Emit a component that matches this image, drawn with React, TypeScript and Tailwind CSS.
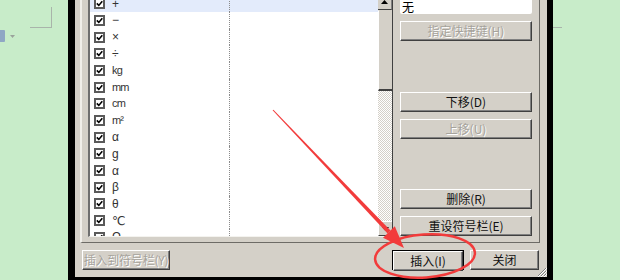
import React from "react";

const items = ["+", "−", "×", "÷", "kg", "mm", "cm", "m²", "α", "g", "α", "β", "θ", "℃", "Ω"];

const btnBase =
  "flex items-center justify-center h-[20px] whitespace-nowrap bg-[#d4d0c8] border border-t-white border-l-white border-b-[#404040] border-r-[#404040] shadow-[inset_-1px_-1px_0_#808080] text-[12px] leading-none";
const enabled = "text-[#111]";
const disabled = "text-[#a6a39c] [text-shadow:1px_1px_0_#ffffff]";

function Check() {
  return (
    <div className="w-[11px] h-[11px] border-2 border-[#5a5a5a] bg-white flex items-center justify-center shrink-0">
      <svg width="7" height="7" viewBox="0 0 7 7">
        <path d="M0.8 3.4 L2.8 5.4 L6.3 1.2" stroke="#000" strokeWidth="1.6" fill="none" />
      </svg>
    </div>
  );
}

function Row({ s, hl }: { s: string; hl: boolean }) {
  const narrow = s === "kg" || s === "mm" || s === "cm" || s === "m²";
  return (
    <div className={hl ? "flex h-[16.7px] shrink-0 bg-[#e3ebfb]" : "flex h-[16.7px] shrink-0"}>
      <div className="w-[139px] flex items-center pl-[4px] gap-[7px]">
        <Check />
        <span
          className={
            narrow
              ? "text-[11px] leading-none tracking-[-0.8px] text-[#333] font-['Liberation_Sans_Narrow','Liberation_Sans',sans-serif]"
              : "text-[12px] leading-none text-[#333] font-['Liberation_Sans','DejaVu_Sans','Noto_Sans_CJK_SC',sans-serif]"
          }
        >
          {s}
        </span>
      </div>
      <div className="flex-1 border-l border-dotted border-[#8a8a8a]" />
    </div>
  );
}

export default function App() {
  return (
    <div className="relative flex w-[620px] h-[280px] overflow-hidden bg-[#c8ecc9] font-['Liberation_Sans','Noto_Sans_CJK_SC',sans-serif]">
      {/* left green area */}
      <div className="w-[68px] shrink-0 flex flex-col">
        <div className="ml-[30px] mt-[7px] w-[22px] h-[21px] border-r border-b border-[#a9b4aa]" />
        <div className="flex items-center mt-[2px] gap-[5px]">
          <div className="w-[5px] h-[12px] bg-[#8fa7c4] rounded-r-[1px]" />
          <svg width="5" height="3" viewBox="0 0 5 3">
            <path d="M0 0 L5 0 L2.5 3 Z" fill="#9aa39b" />
          </svg>
        </div>
      </div>

      {/* dialog */}
      <div className="relative w-[485px] h-[280px] shrink-0 border-l-[7px] border-r-[6px] border-b-[3px] border-black bg-[#d4d0c8] flex flex-col">
        {/* top section */}
        <div className="h-[243px] shrink-0 pl-[5px] pr-[7px] flex">
          <div className="flex-1 flex border-l-2 border-l-[#f1efea] border-r border-r-[#6d6b66] border-b border-b-[#6d6b66] pl-[6px] pr-[7px] pb-[5px]">
            {/* list */}
            <div className="w-[305px] h-[237px] flex border-l-2 border-l-[#6f6f6f] border-b border-b-[#f4f3ef] bg-white overflow-hidden">
              <div className="flex-1 flex flex-col -mt-[4.7px] overflow-hidden">
                {items.map((s, i) => (
                  <Row key={i} s={s} hl={i === 0} />
                ))}
              </div>
              {/* scrollbar */}
              <div className="w-[15px] flex flex-col border-r border-r-[#404040] bg-[repeating-conic-gradient(#ffffff_0%_25%,#d4d0c8_0%_50%)] bg-[length:2px_2px]">
                <div className="h-[16px] -mt-[6px] shrink-0 bg-[#d4d0c8] border-b border-b-[#404040] border-r border-r-[#808080] flex items-center justify-center">
                  <svg width="7" height="4" viewBox="0 0 7 4">
                    <path d="M0 4 L3.5 0 L7 4 Z" fill="#000" />
                  </svg>
                </div>
                <div className="h-[81px] shrink-0 bg-[#d4d0c8] border-t border-t-[#d4d0c8] border-l border-l-white border-b-2 border-b-[#404040]" />
                <div className="flex-1" />
                <div className="h-[15px] shrink-0 bg-[#d4d0c8] border-t border-t-white border-l border-l-white border-b border-b-[#404040] flex items-center justify-center">
                  <svg width="7" height="4" viewBox="0 0 7 4">
                    <path d="M0 0 L3.5 4 L7 0 Z" fill="#000" />
                  </svg>
                </div>
              </div>
            </div>

            {/* right column */}
            <div className="ml-[7px] w-[132px] flex flex-col">
              <div className="h-[14px] -mb-[1px] shrink-0 bg-white rounded-b-[2px] flex items-center pl-[2px] text-[12px] leading-[12px] text-black font-['Noto_Sans_CJK_SC',sans-serif]">
                无
              </div>
              <div className={`${btnBase} ${disabled} mt-[8px] font-['Noto_Sans_CJK_SC',sans-serif]`}>指定快捷键(H)</div>
              <div className={`${btnBase} ${enabled} mt-[51px] font-['Noto_Sans_CJK_SC',sans-serif]`}>下移(D)</div>
              <div className={`${btnBase} ${disabled} mt-[7px] font-['Noto_Sans_CJK_SC',sans-serif]`}>上移(U)</div>
              <div className={`${btnBase} ${enabled} mt-[50px] font-['Noto_Sans_CJK_SC',sans-serif]`}>删除(R)</div>
              <div className={`${btnBase} ${enabled} mt-[7px] font-['Noto_Sans_CJK_SC',sans-serif]`}>重设符号栏(E)</div>
            </div>
          </div>
        </div>

        {/* bottom section */}
        <div className="flex-1 flex items-start pt-[7px] pl-[7px] pr-[8px] font-['Noto_Sans_CJK_SC',sans-serif]">
          <div className={`${btnBase} ${disabled} w-[88px] text-[11.5px] tracking-[-0.2px]`}>插入到符号栏(Y)</div>
          <div className="flex-1" />
          <div className="w-[72px] h-[20px] border border-black flex">
            <div className={`${btnBase} ${enabled} flex-1 h-[18px]`}>插入(I)</div>
          </div>
          <div className={`${btnBase} ${enabled} w-[69px] ml-[6px]`}>关闭</div>
        </div>

        {/* resize grip */}
        <svg className="absolute right-0 bottom-0" width="10" height="10" viewBox="0 0 10 10">
          <path d="M9 1 L1 9 M9 4 L4 9 M9 7 L7 9" stroke="#808080" strokeWidth="1" />
          <path d="M10 1 L1 10 M10 4 L4 10 M10 7 L7 10" stroke="#ffffff" strokeWidth="1" />
        </svg>
      </div>

      {/* right green area */}
      <div className="flex-1 flex flex-col">
        <div className="mt-[27px] w-[9px] h-px bg-[#a9b4aa]" />
      </div>

      {/* red annotations */}
      <svg className="absolute inset-0 pointer-events-none" width="620" height="280" viewBox="0 0 620 280">
        <polygon points="272.6,110.3 273.4,109.7 390.5,230.6 387.6,233.4" fill="#f23b3b" />
        <polygon points="404,248 383,237.8 394.8,226.3" fill="#f23b3b" />
        <ellipse cx="425" cy="256" rx="50" ry="21.5" transform="rotate(-4 425 256)" fill="none" stroke="#f23b3b" strokeWidth="2.5" />
      </svg>
    </div>
  );
}
